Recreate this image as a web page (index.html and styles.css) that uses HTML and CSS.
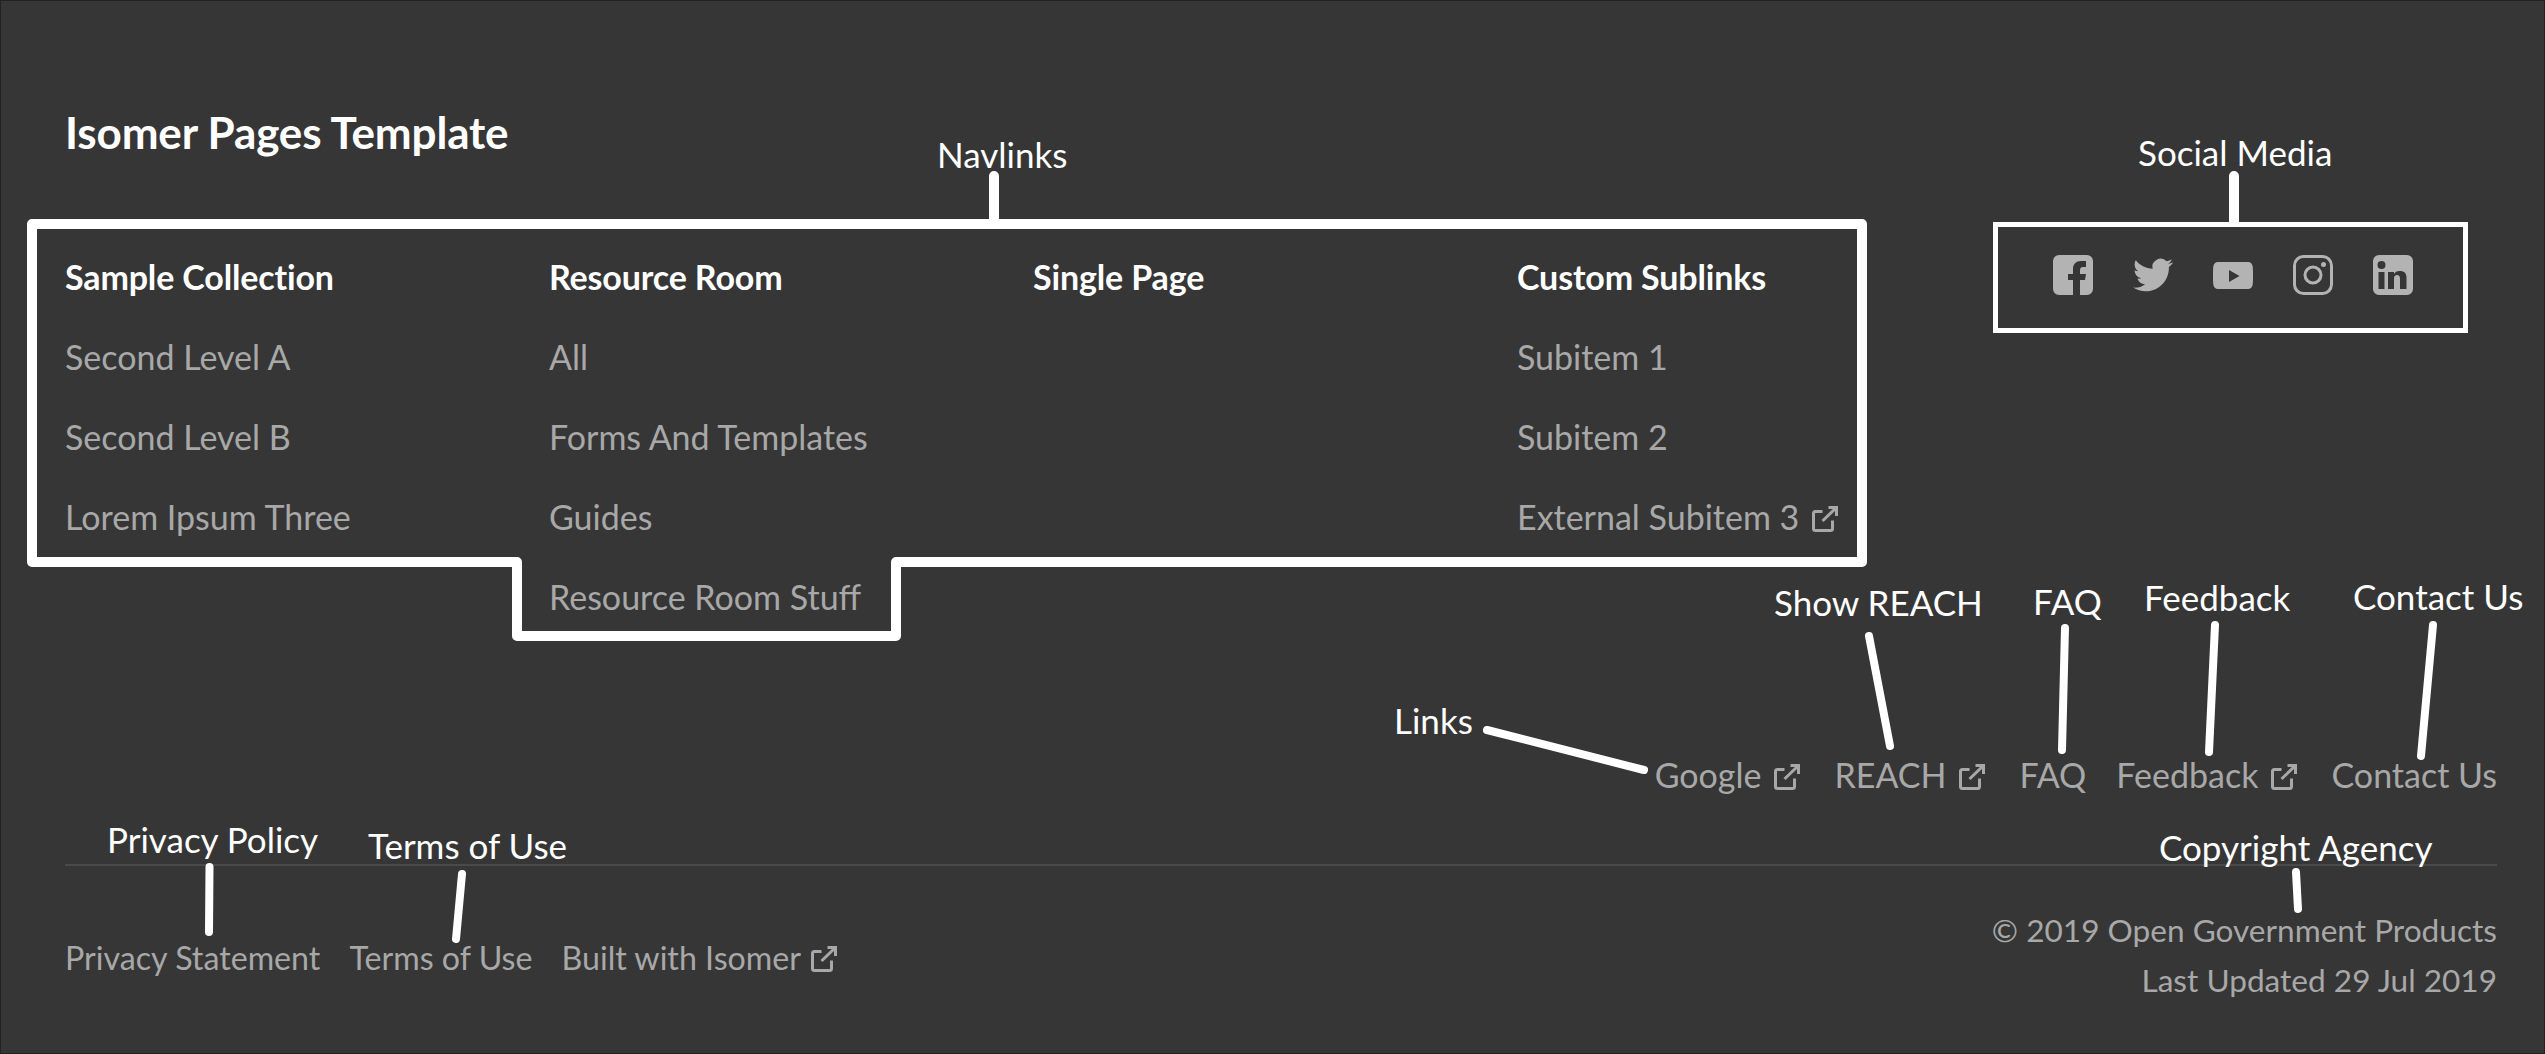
FILE: index.html
```html
<!DOCTYPE html>
<html lang="en">
<head>
  <meta charset="UTF-8">
  <title>Isomer Pages Template</title>
  <link rel="stylesheet" href="styles.css">
</head>
<body>
  <svg width="0" height="0" class="defs">
    <symbol id="ext" viewBox="0 0 26 26">
      <path d="M10.500 5.500H3.500a2 2 0 0 0-2 2v15a2 2 0 0 0 2 2h15a2 2 0 0 0 2-2v-8M10.500 15 24 2M16.500 1.500h8V10" fill="none" stroke="currentColor" stroke-width="3"/>
    </symbol>
  </svg>

  <footer class="footer">
    <h1 class="site-name">Isomer Pages Template</h1>

    <div class="footer-top">
      <nav class="navlinks">
        <ul class="nav-col">
          <li class="nav-head">Sample Collection</li>
          <li>Second Level A</li>
          <li>Second Level B</li>
          <li>Lorem Ipsum Three</li>
        </ul>
        <ul class="nav-col">
          <li class="nav-head">Resource Room</li>
          <li>All</li>
          <li>Forms And Templates</li>
          <li>Guides</li>
          <li>Resource Room Stuff</li>
        </ul>
        <ul class="nav-col">
          <li class="nav-head">Single Page</li>
        </ul>
        <ul class="nav-col">
          <li class="nav-head">Custom Sublinks</li>
          <li>Subitem 1</li>
          <li>Subitem 2</li>
          <li>External Subitem 3<svg class="ext"><use href="#ext"/></svg></li>
        </ul>
      </nav>

      <div class="social">
        <svg class="social-icon" viewBox="0 0 40 40"><path d="M6 0h28a6 6 0 0 1 6 6v28a6 6 0 0 1-6 6h-7V25h5l1-6h-6v-4c0-2 1-3 3-3h3V6h-5c-5 0-8 3-8 8v5h-5v6h5v15H6a6 6 0 0 1-6-6V6a6 6 0 0 1 6-6z"/></svg>
        <svg class="social-icon" viewBox="0 0 24 24"><path d="M23.953 4.570a10 10 0 0 1-2.825.775 4.958 4.958 0 0 0 2.163-2.723c-.951.555-2.005.959-3.127 1.184a4.920 4.920 0 0 0-8.384 4.482C7.690 8.095 4.067 6.130 1.640 3.162a4.822 4.822 0 0 0-.666 2.475c0 1.710.870 3.213 2.188 4.096a4.904 4.904 0 0 1-2.228-.616v.060a4.923 4.923 0 0 0 3.946 4.827 4.996 4.996 0 0 1-2.212.085 4.936 4.936 0 0 0 4.604 3.417 9.867 9.867 0 0 1-6.102 2.105c-.390 0-.779-.023-1.170-.067a13.995 13.995 0 0 0 7.557 2.209c9.053 0 13.998-7.496 13.998-13.985 0-.210 0-.420-.015-.630A9.935 9.935 0 0 0 24 4.590z"/></svg>
        <svg class="social-icon" viewBox="0 0 40 40"><path fill-rule="evenodd" d="M5 7h30c2.500 0 4.500 2 4.700 4.500.5 6 .5 12 0 18C39.500 32 37.500 34 35 34H5c-2.500 0-4.500-2-4.700-4.500-.5-6-.5-12 0-18C.5 9 2.500 7 5 7zm11 8v12l10.500-6z"/></svg>
        <svg class="social-icon" viewBox="0 0 40 40"><rect x="1.500" y="1.500" width="37" height="37" rx="9" fill="none" stroke="currentColor" stroke-width="3"/><circle cx="20" cy="20" r="8" fill="none" stroke="currentColor" stroke-width="3"/><circle cx="30.500" cy="9.500" r="2.500"/></svg>
        <svg class="social-icon" viewBox="0 0 40 40"><path fill-rule="evenodd" d="M6 0h28a6 6 0 0 1 6 6v28a6 6 0 0 1-6 6H6a6 6 0 0 1-6-6V6a6 6 0 0 1 6-6zm2.500 6a4 4 0 1 0 0 8 4 4 0 0 0 0-8zM5.500 17v17h6V17zm9.500 0v17h6V24c0-3 1-4 3-4s3 1 3 4v10h6.500V23c0-6-3-7-7-7-3 0-4 1-5.500 3v-2z"/></svg>
      </div>
    </div>

    <div class="footer-links">
      <a>Google<svg class="ext"><use href="#ext"/></svg></a>
      <a>REACH<svg class="ext"><use href="#ext"/></svg></a>
      <a>FAQ</a>
      <a class="link-tight">Feedback<svg class="ext"><use href="#ext"/></svg></a>
      <a>Contact Us</a>
    </div>

    <div class="footer-bottom">
      <div class="legal">
        <a>Privacy Statement</a>
        <a>Terms of Use</a>
        <a>Built with Isomer<svg class="ext"><use href="#ext"/></svg></a>
      </div>
      <div class="copyright">
        <div>© 2019 Open Government Products</div>
        <div>Last Updated 29 Jul 2019</div>
      </div>
    </div>
  </footer>

  <!-- annotations drawn over the footer -->
  <svg class="marks" width="2545" height="1054" fill="none" stroke="#fff" stroke-linecap="round" stroke-linejoin="round">
    <path stroke-width="10" d="M32 224H1862V562H896V636H517V562H32Z"/>
    <rect x="1995.500" y="224.500" width="470" height="106" stroke-width="5" stroke-linejoin="miter"/>
    <path stroke-width="10" d="M2234 176V222M994 176V220"/>
    <path stroke-width="8" d="M1487 730 1644 770M1869 636 1890 746M2065 628 2062 750M2215 625 2209 752M2433 625 2421 756M209.500 867 209 932M462 874 456 939"/>
    <path stroke-width="8" d="M2296 872 2298 909"/>
  </svg>
  <div class="note note-nav">Navlinks</div>
  <div class="note note-social">Social Media</div>
  <div class="note note-reach">Show REACH</div>
  <div class="note note-faq">FAQ</div>
  <div class="note note-feedback">Feedback</div>
  <div class="note note-contact">Contact Us</div>
  <div class="note note-links">Links</div>
  <div class="note note-privacy">Privacy Policy</div>
  <div class="note note-terms">Terms of Use</div>
  <div class="note note-copy">Copyright Agency</div>
</body>
</html>
```

FILE: styles.css
```css
* {
  box-sizing: border-box;
}

html, body {
  margin: 0;
  background: #363636;
}

body {
  position: relative;
  width: 2545px;
  height: 1054px;
  overflow: hidden;
  font-family: Lato, sans-serif;
}

.defs {
  position: absolute;
}

.footer {
  height: 1054px;
  padding: 107px 47px 0 64px;
  border: 1px solid #222;
  color: #a8a8a8;
  font-size: 34px;
  line-height: 48px;
}

.site-name {
  margin: 0;
  color: #fff;
  font-size: 44px;
  line-height: 48px;
  font-weight: 700;
  letter-spacing: -0.15px;
}

.footer-top {
  display: flex;
  justify-content: space-between;
  align-items: flex-start;
  margin-top: 97px;
}

.navlinks {
  display: grid;
  grid-template-columns: repeat(4, 484px);
}

.nav-col {
  margin: 0;
  padding: 0;
  list-style: none;
}

.nav-col li {
  height: 80px;
  white-space: nowrap;
}

.nav-col .nav-head {
  color: #fff;
  font-weight: 700;
  font-variant-ligatures: none;
  letter-spacing: -0.15px;
}

.ext {
  width: 26px;
  height: 26px;
  margin-left: 13px;
  vertical-align: -2px;
}

.social {
  display: flex;
  gap: 40px;
  margin-top: 2px;
  margin-right: 84px;
  color: #b3b3b3;
}

.social-icon {
  width: 40px;
  height: 40px;
  fill: currentColor;
}

.footer-links {
  display: flex;
  justify-content: flex-end;
  gap: 34px;
  margin-top: 98px;
}

.link-tight {
  margin-left: -4px;
}

.footer-bottom {
  display: flex;
  justify-content: space-between;
  align-items: center;
  margin-top: 65px;
  padding-top: 39px;
  border-top: 2px solid #4a4a4a;
  font-size: 32px;
}

.legal {
  display: flex;
  gap: 29px;
  margin-top: 6px;
  font-size: 32.200px;
}

.legal .ext {
  margin-left: 10px;
}

.copyright {
  text-align: right;
  line-height: 50px;
  font-size: 31.600px;
}

.marks {
  position: absolute;
  left: 0;
  top: 0;
}

.note {
  position: absolute;
  color: #fff;
  font-size: 35px;
  line-height: 44px;
  white-space: nowrap;
}

.note-nav { left: 937px; top: 132px; }
.note-social { left: 2138px; top: 130px; }
.note-reach { left: 1774px; top: 580px; }
.note-faq { left: 2033px; top: 579px; }
.note-feedback { left: 2144px; top: 575px; }
.note-contact { left: 2353px; top: 574px; }
.note-links { left: 1394px; top: 698px; }
.note-privacy { left: 107px; top: 817px; }
.note-terms { left: 368px; top: 823px; }
.note-copy { left: 2159px; top: 825px; }
```
